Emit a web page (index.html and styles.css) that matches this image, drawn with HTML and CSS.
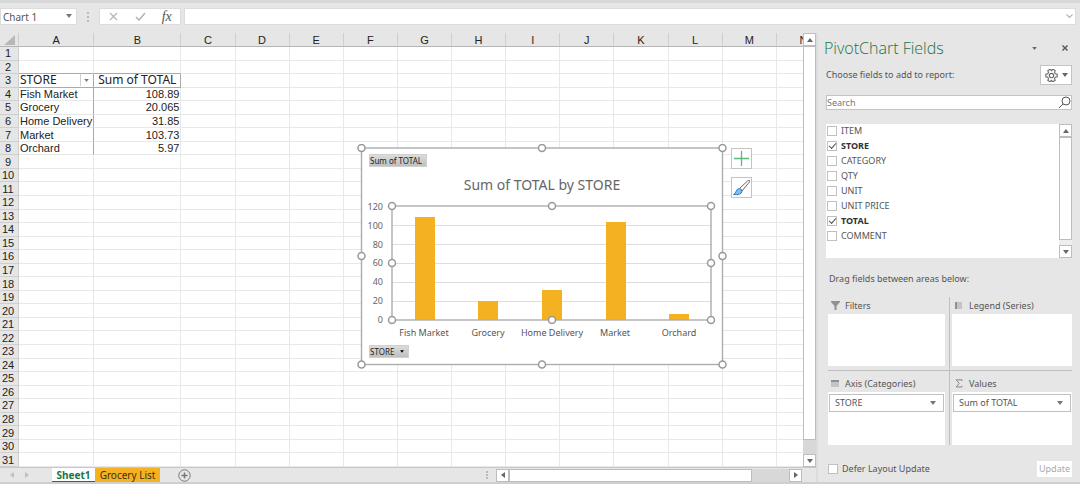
FILE: index.html
```html
<!DOCTYPE html>
<html lang="en">
<head>
<meta charset="utf-8">
<title>Grocery workbook</title>
<link rel="stylesheet" href="styles.css">
</head>
<body>
<header class="formula-bar">
  <div class="drop name-box">
    <select aria-label="Name box"><option>Chart 1</option></select>
    <svg class="caret" viewBox="0 0 6 4"><path d="M0 0h6L3 4z"/></svg>
  </div>
  <svg class="dots" viewBox="0 0 2 10"><path d="M0 0h2v2H0zM0 4h2v2H0zM0 8h2v2H0z"/></svg>
  <div class="fx-group">
    <button aria-label="Cancel"><svg width="9" height="9" viewBox="0 0 9 9"><path d="M1 1l7 7M8 1L1 8"/></svg></button>
    <button aria-label="Enter"><svg width="11" height="9" viewBox="0 0 11 9"><path d="M1 5l3 3 6-7" stroke-width="1.6"/></svg></button>
    <button class="fx" aria-label="Insert function">fx</button>
  </div>
  <div class="formula">
    <input type="text" aria-label="Formula">
    <svg width="7" height="5" viewBox="0 0 7 5"><path d="M.5.5l3 3 3-3"/></svg>
  </div>
</header>
<main class="work">
  <section class="book">
    <div class="sheet-row">
      <div class="sheet">
        <table class="grid" id="grid"></table>
      </div>
      <div class="vscroll">
        <button aria-label="Scroll up"><svg width="6" height="4" viewBox="0 0 6 4"><path d="M0 4h6L3 0z"/></svg></button>
        <div class="thumb"></div>
        <div class="rest"></div>
        <button aria-label="Scroll down"><svg width="6" height="4" viewBox="0 0 6 4"><path d="M0 0h6L3 4z"/></svg></button>
      </div>
      <section class="chart">
        <button class="chip">Sum of TOTAL</button>
        <h2>Sum of TOTAL by STORE</h2>
        <svg class="plot" viewBox="0 0 362 141" role="img" aria-label="Sum of TOTAL by STORE">
          <g class="lines"><path d="M31 25.5h320M31 44.5h320M31 63.5h320M31 82.5h320M31 101.5h320"/></g>
          <g class="bars">
            <rect x="54" y="17" width="20" height="103"/>
            <rect x="117" y="101" width="20" height="19"/>
            <rect x="181" y="90" width="20" height="30"/>
            <rect x="245" y="22" width="20" height="98"/>
            <rect x="308" y="114" width="20" height="6"/>
          </g>
          <rect class="frame" x="31" y="6" width="319" height="114"/>
          <g class="ylab">
            <text x="22" y="10">120</text><text x="22" y="29">100</text><text x="22" y="48">80</text>
            <text x="22" y="66">60</text><text x="22" y="85">40</text><text x="22" y="104">20</text><text x="22" y="123">0</text>
          </g>
          <g class="xlab">
            <text x="63" y="136">Fish Market</text><text x="127" y="136">Grocery</text>
            <text x="191" y="136">Home Delivery</text><text x="254" y="136">Market</text><text x="318" y="136">Orchard</text>
          </g>
          <g class="handles">
            <circle cx="31" cy="6" r="3.5"/><circle cx="191" cy="6" r="3.5"/><circle cx="350" cy="6" r="3.5"/>
            <circle cx="31" cy="63" r="3.5"/><circle cx="350" cy="63" r="3.5"/>
            <circle cx="31" cy="120" r="3.5"/><circle cx="191" cy="120" r="3.5"/><circle cx="350" cy="120" r="3.5"/>
          </g>
        </svg>
        <button class="chip">STORE <svg width="4" height="3" viewBox="0 0 6 4"><path d="M0 0h6L3 4z"/></svg></button>
        <svg class="outline" viewBox="0 0 370 225">
          <rect class="frame" x="4.500" y="4" width="361" height="216.500"/>
          <g class="handles">
            <circle cx="4.500" cy="4" r="3.5"/><circle cx="185" cy="4" r="3.5"/><circle cx="365.500" cy="4" r="3.5"/>
            <circle cx="4.500" cy="112" r="3.5"/><circle cx="365.500" cy="112" r="3.5"/>
            <circle cx="4.500" cy="220.500" r="3.5"/><circle cx="185" cy="220.500" r="3.5"/><circle cx="365.500" cy="220.500" r="3.5"/>
          </g>
        </svg>
        <div class="tools">
          <button aria-label="Chart elements"><svg width="19" height="19" viewBox="0 0 19 19"><path d="M9.500 2v15M2 9.500h15" stroke="#5fb878" stroke-width="1.300"/></svg></button>
          <button aria-label="Chart styles"><svg width="19" height="19" viewBox="0 0 19 19"><path d="M7.500 10.500L15.500 3q1.500-1 2-.5t-.5 2l-7 8.500z" fill="#fff" stroke="#666"/><path d="M1.500 16.500q2-1 2.500-3 1-3 3.500-3 2.500.5 2.500 3-1 4-8.500 3z" fill="#7dbdf0" stroke="#2f7fc4"/></svg></button>
        </div>
      </section>
    </div>
    <footer class="tabs">
      <nav class="tab-nav">
        <button aria-label="Previous sheet"><svg width="4" height="6" viewBox="0 0 4 6"><path d="M4 0v6L0 3z"/></svg></button>
        <button aria-label="Next sheet"><svg width="4" height="6" viewBox="0 0 4 6"><path d="M0 0v6l4-3z"/></svg></button>
      </nav>
      <button class="tab active">Sheet1</button>
      <button class="tab gold">Grocery List</button>
      <button class="add" aria-label="New sheet"><svg width="13" height="13" viewBox="0 0 13 13"><circle cx="6.500" cy="6.500" r="5.700"/><path d="M6.500 3.500v6M3.500 6.500h6" stroke-width="1.500"/></svg></button>
      <svg class="dots tab-dots" viewBox="0 0 2 10"><path d="M0 1h2v2H0zM0 4h2v2H0zM0 7h2v2H0z"/></svg>
      <div class="hscroll">
        <button aria-label="Scroll left"><svg width="4" height="6" viewBox="0 0 4 6"><path d="M4 0v6L0 3z"/></svg></button>
        <div class="thumb"></div>
        <div class="rest"></div>
        <button aria-label="Scroll right"><svg width="4" height="6" viewBox="0 0 4 6"><path d="M0 0v6l4-3z"/></svg></button>
      </div>
    </footer>
  </section>
  <aside class="pane">
    <div class="pane-head">
      <h1>PivotChart Fields</h1>
      <button aria-label="Pane options"><svg width="5" height="3" viewBox="0 0 6 4"><path d="M0 0h6L3 4z"/></svg></button>
      <button aria-label="Close pane"><svg class="close" width="6" height="6" viewBox="0 0 6 6"><path d="M.5.5l5 5M5.500.5l-5 5"/></svg></button>
    </div>
    <div class="pane-sub">
      <span>Choose fields to add to report:</span>
      <button class="gear" aria-label="Tools">
        <svg width="13" height="13" viewBox="0 0 24 24" fill="none" stroke="#666" stroke-width="2"><g transform="rotate(90 12 12)"><path d="M9.500 1.500h5l.8 3.600 2.200 1.300 3.500-1.100 2.500 4.300-2.700 2.400 2.700 2.400-2.500 4.300-3.500-1.100-2.200 1.300-.8 3.600h-5l-.8-3.600-2.200-1.300L3 18.700.5 14.400 3.200 12 .5 9.600 3 5.300l3.500 1.100 2.200-1.300z"/></g><circle cx="12" cy="12" r="4"/></svg>
        <svg width="6" height="4" viewBox="0 0 6 4"><path d="M0 0h6L3 4z" fill="#666"/></svg>
      </button>
    </div>
    <div class="search">
      <input type="text" placeholder="Search" aria-label="Search fields">
      <svg width="13" height="13" viewBox="0 0 13 13"><circle cx="8" cy="5" r="4"/><path d="M5 8l-4 4"/></svg>
    </div>
    <div class="field-box">
      <div class="fields">
        <label><input type="checkbox">ITEM</label>
        <label><input type="checkbox" checked>STORE</label>
        <label><input type="checkbox">CATEGORY</label>
        <label><input type="checkbox">QTY</label>
        <label><input type="checkbox">UNIT</label>
        <label><input type="checkbox">UNIT PRICE</label>
        <label><input type="checkbox" checked>TOTAL</label>
        <label><input type="checkbox">COMMENT</label>
      </div>
      <div class="vscroll">
        <button aria-label="Scroll fields up"><svg width="6" height="4" viewBox="0 0 6 4"><path d="M0 4h6L3 0z"/></svg></button>
        <div class="thumb"></div>
        <div class="rest"></div>
        <button aria-label="Scroll fields down"><svg width="6" height="4" viewBox="0 0 6 4"><path d="M0 0h6L3 4z"/></svg></button>
      </div>
    </div>
    <p class="drag">Drag fields between areas below:</p>
    <div class="areas">
      <section class="area">
        <h3><svg width="9" height="9" viewBox="0 0 9 9"><path d="M0 0h9v1L5.500 5v4h-2V5L0 1z"/></svg>Filters</h3>
        <div class="well"></div>
      </section>
      <section class="area">
        <h3><svg width="9" height="9" viewBox="0 0 9 9"><path d="M0 1h2v7H0z"/><path d="M2 1h5v7H2z" opacity=".4"/></svg>Legend (Series)</h3>
        <div class="well"></div>
      </section>
      <section class="area">
        <h3><svg width="9" height="9" viewBox="0 0 9 9"><path d="M0 1h8v2H0z"/><path d="M0 3h8v5H0z" opacity=".4"/></svg>Axis (Categories)</h3>
        <div class="well"><div class="drop"><select aria-label="Axis field"><option>STORE</option></select><svg class="caret" viewBox="0 0 6 4"><path d="M0 0h6L3 4z"/></svg></div></div>
      </section>
      <section class="area">
        <h3><svg width="9" height="9" viewBox="0 0 9 9"><path d="M7 2V.8H1.200l3 3.500-3 3.700H7V6.800" fill="none" stroke="#888"/></svg>Values</h3>
        <div class="well"><div class="drop"><select aria-label="Values field"><option>Sum of TOTAL</option></select><svg class="caret" viewBox="0 0 6 4"><path d="M0 0h6L3 4z"/></svg></div></div>
      </section>
    </div>
    <div class="pane-foot">
      <label><input type="checkbox">Defer Layout Update</label>
      <button disabled>Update</button>
    </div>
  </aside>
</main>
<script src="grid.js"></script>
</body>
</html>
```
FILE: grid.js
```js
const columns = "ABCDEFGHIJKLMN".split("");
const rowCount = 31;
const pivot = {
  3: ["STORE", "Sum of TOTAL"],
  4: ["Fish Market", "108.89"],
  5: ["Grocery", "20.065"],
  6: ["Home Delivery", "31.85"],
  7: ["Market", "103.73"],
  8: ["Orchard", "5.97"]
};
const filterButton =
  '<button class="filter" aria-label="Filter STORE"><svg width="5" height="3" viewBox="0 0 6 4"><path d="M0 0h6L3 4z"/></svg></button>';

let html = '<thead><tr><th class="corner"><svg width="11" height="10" viewBox="0 0 11 10"><path d="M11 0v10H0z"/></svg></th>';
html += columns.map(c => `<th scope="col">${c}</th>`).join("") + "</tr></thead><tbody>";
for (let r = 1; r <= rowCount; r++) {
  const data = pivot[r] || [];
  const kind = r === 2 ? "above" : r === 3 ? "pivot-head" : data.length ? "pivot" : "";
  html += `<tr class="${kind}"><th scope="row">${r}</th>`;
  html += columns.map((c, i) => {
    const text = data[i] || "";
    return r === 3 && i === 0
      ? `<td><div class="with-filter">${text}${filterButton}</div></td>`
      : `<td>${text}</td>`;
  }).join("");
  html += "</tr>";
}
document.getElementById("grid").innerHTML = html + "</tbody>";
```
FILE: styles.css
```css
* { box-sizing: border-box; }

body {
  margin: 0;
  min-height: 100vh;
  display: flex;
  flex-direction: column;
  background: #e6e6e6;
  border-top: 3px solid #d8d8d8;
  border-bottom: 2px solid #cfcfcf;
  font: 9px/12px "Noto Sans", "Open Sans", sans-serif;
  color: #555;
  overflow: hidden;
}

button, input, select { font: inherit; color: inherit; margin: 0; padding: 0; border: 0; border-radius: 0; }
button { display: flex; align-items: center; justify-content: center; background: none; }
select { appearance: none; width: 100%; height: 100%; background: none; }
h1, h2, h3, p { margin: 0; font-weight: 400; }
svg { display: block; flex: none; }

/* formula bar */
.formula-bar { display: flex; align-items: center; height: 30px; padding: 5px 4px 8px 0; gap: 3px; }
.formula-bar > div { height: 17px; background: #fff; border: 1px solid #dcdcdc; }
.drop { position: relative; }
.caret { position: absolute; right: 7px; top: 6px; width: 6px; height: 4px; fill: #777; pointer-events: none; }
.name-box { width: 77px; font-size: 10px; }
.name-box select { padding-left: 2px; }
.name-box .caret { right: 4px; top: 5px; }
.dots { width: 2px; height: 10px; margin: 0 7px; fill: #bbb; }
.fx-group { display: flex; align-items: center; width: 82px; }
.fx-group button { flex: 1; height: 100%; }
.fx-group svg, .formula svg { fill: none; stroke: #b5b5b5; stroke-width: 1.2; }
.fx-group .fx { font: italic 14px/14px "Liberation Serif", serif; color: #555; }
.formula { flex: 1; display: flex; align-items: center; padding-right: 2px; }
.formula input { flex: 1; min-width: 0; outline: 0; }

/* workbook */
.work { flex: 1; display: flex; }
.book { flex: 1; min-width: 0; display: flex; flex-direction: column; }
.sheet-row { flex: 1; display: flex; position: relative; }
.sheet { flex: 1; min-width: 0; overflow: hidden; background: #fff; }
.grid {
  width: 831px;
  height: 100%;
  table-layout: fixed;
  border-collapse: separate;
  border-spacing: 0;
  font: 11px/12px "Liberation Sans", Arial, sans-serif;
  color: #222;
}
.grid th, .grid td { padding: 0 1px; font-weight: 400; white-space: nowrap; border: 0 solid #e8e8e8; border-width: 0 1px 1px 0; width: 54px; }
.grid th { background: #e6e6e6; border-color: #cfcfcf; }
.grid thead th { height: 14px; border-bottom-color: #b5b5b5; }
.grid th:first-child { width: 19px; padding-right: 3px; }
.grid th:nth-child(2) { width: 75px; }
.grid th:nth-child(3) { width: 87px; }
.grid td:nth-child(3) { text-align: right; }
.corner svg { margin-left: auto; fill: #b8b8b8; }
.pivot td:nth-child(2), .pivot-head td:nth-child(2), .pivot-head td:nth-child(3) { border-right-color: #aaa; }
.above td:nth-child(2), .above td:nth-child(3), .pivot-head td:nth-child(2), .pivot-head td:nth-child(3) { border-bottom-color: #aaa; }
.pivot-head td { font: 12px/12px "Noto Sans", sans-serif; }
.grid .pivot-head td:nth-child(3) { text-align: center; }
.with-filter { display: flex; align-items: center; justify-content: space-between; }
.filter { width: 12px; height: 12px; border-left: 1px solid #d0d0d0; }
.filter svg { fill: #777; }

/* scroll bars */
.vscroll { display: flex; flex-direction: column; width: 13px; background: #d8d8d8; }
.vscroll button, .hscroll button, .vscroll .thumb, .hscroll .thumb { background: #fff; border: 1px solid #bdbdbd; }
.vscroll button { height: 13px; }
.vscroll svg, .hscroll svg { fill: #666; }
.vscroll .thumb { flex: 394; }
.vscroll .rest { flex: 14; }
.hscroll { display: flex; width: 306px; height: 13px; background: #d8d8d8; }
.hscroll button { width: 13px; }
.hscroll .thumb { flex: 243; }
.hscroll .rest { flex: 37; }

/* chart, floating over the cells */
.chart {
  position: absolute;
  left: 361px;
  top: 115px;
  width: 362px;
  padding: 6px 0;
  background: #fff;
}
.chip { height: 13px; margin-left: 8px; padding: 0 4px 0 0; gap: 6px; font-size: 8px; color: #222; background: linear-gradient(#dcdcdc, #bfbfbf); border: 1px solid #d0d0d0; }
.chart h2 { padding: 8px 0 5px; font-size: 14px; line-height: 20px; text-align: center; color: #666; }
.plot { width: 100%; margin-bottom: 4px; }
.lines { stroke: #dedede; }
.bars { fill: #f4b223; }
.frame { fill: none; stroke: #adadad; stroke-width: 1.4; }
.handles { fill: #fff; stroke: #999; stroke-width: 1.5; }
.ylab { text-anchor: end; fill: #666; }
.xlab { text-anchor: middle; fill: #555; }
.outline { position: absolute; left: -4px; top: -4px; width: 370px; height: 225px; pointer-events: none; }
.tools { position: absolute; left: 370px; top: 0; display: flex; flex-direction: column; gap: 8px; }
.tools button { width: 21px; height: 21px; background: #fff; border: 1px solid #c4c4c4; }
.tools svg { fill: none; }

/* sheet tabs */
.tabs { display: flex; align-items: center; height: 15px; padding-right: 14px; border-top: 1px solid #c8c8c8; }
.tab-nav { display: flex; gap: 11px; padding: 0 23px 0 10px; }
.tab-nav svg { fill: #c0c0c0; }
.tab { height: 14px; font-size: 10px; }
.active { width: 43px; background: #fff; color: #217346; font-weight: 700; border-bottom: 1px solid #217346; }
.gold { width: 65px; background: #f4b223; color: #3d3010; }
.add { margin-left: 18px; }
.add svg { fill: none; stroke: #777; }
.tab-dots { margin-left: auto; margin-right: 8px; }

/* field pane */
.pane { width: 264px; padding: 4px 8px 0; border-left: 2px solid #dcdcdc; display: flex; flex-direction: column; }
.pane-head { display: flex; align-items: center; height: 22px; padding-right: 4px; gap: 25px; }
.pane-head h1 { flex: 1; font: 300 16px/22px "Open Sans", "Noto Sans", sans-serif; color: #217346; white-space: nowrap; margin-left: -2px; }
.pane-head svg { fill: #666; }
.pane-head .close { stroke: #555; stroke-width: 1.4; }
.pane-sub { display: flex; align-items: center; justify-content: space-between; height: 20px; margin-top: 6px; }
.gear { width: 32px; height: 20px; gap: 4px; background: #fff; border: 1px solid #c4c4c4; }
.search { display: flex; align-items: center; height: 15px; margin-top: 10px; background: #fff; border: 1px solid #c4c4c4; }
.search input { flex: 1; min-width: 0; background: none; outline: 0; }
.search input::placeholder { color: #777; }
.search svg { fill: none; stroke: #555; }
.field-box { display: flex; justify-content: space-between; height: 134px; margin-top: 14px; background: #fff; }
.fields label { display: flex; align-items: center; gap: 4px; height: 15px; padding: 0 0 2px 1px; }
.fields label:has(:checked) { font-weight: 700; color: #333; }
input[type="checkbox"] { appearance: none; width: 10px; height: 10px; background: #fff; border: 1px solid #c0c0c0; display: grid; place-items: center; }
input[type="checkbox"]:checked::before { content: ""; width: 6px; height: 3px; border: solid #555; border-width: 0 0 1px 1px; transform: translateY(-1px) rotate(-48deg); }
.field-box .thumb { flex: 103; }
.field-box .rest { flex: 5; background: #eee; }
.drag { margin: 15px 0 12px 3px; }
.areas { display: grid; grid-template-columns: 122px 1fr; margin-left: 2px; }
.area { height: 74px; padding-bottom: 4px; display: flex; flex-direction: column; }
.area:nth-child(odd) { border-right: 1px solid #bfbfbf; padding-right: 4px; }
.area:nth-child(even) { padding-left: 2px; }
.area:nth-child(-n+2) { border-bottom: 1px solid #bfbfbf; }
.area:nth-child(n+3) { padding-bottom: 0; padding-top: 4px; }
.area h3 { display: flex; align-items: center; gap: 5px; height: 17px; padding-left: 3px; font-size: 9px; }
.area h3 svg { fill: #909090; }
.well { flex: 1; padding: 2px 1px; background: #fff; }
.well .drop { height: 18px; border: 1px solid #c0c0c0; }
.well select { padding-left: 5px; }
.pane-foot { display: flex; align-items: center; justify-content: space-between; height: 16px; margin: 16px 0 4px 2px; }
.pane-foot label { display: flex; align-items: center; gap: 4px; }
.pane-foot button { width: 35px; height: 16px; background: #fff; color: #aaa; }
```
